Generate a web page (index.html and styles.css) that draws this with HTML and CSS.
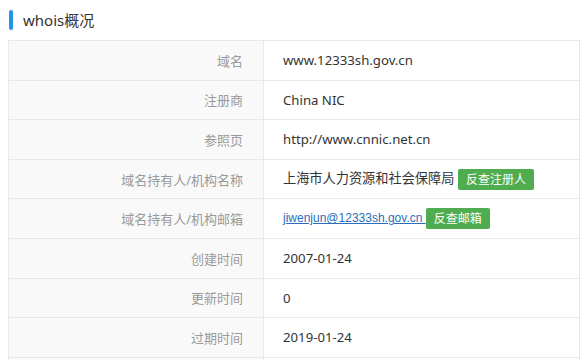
FILE: index.html
```html
<!DOCTYPE html>
<html lang="zh-CN">
<head>
<meta charset="utf-8">
<link rel="stylesheet" href="styles.css">
</head>
<body>
<div class="panel">
  <h2 class="title">whois概况</h2>
  <table class="whois">
    <tr><th>域名</th><td>www.12333sh.gov.cn</td></tr>
    <tr><th>注册商</th><td>China NIC</td></tr>
    <tr><th>参照页</th><td>http://www.cnnic.net.cn</td></tr>
    <tr><th>域名持有人/机构名称</th><td>上海市人力资源和社会保障局 <a class="btn" href="#">反查注册人</a></td></tr>
    <tr><th>域名持有人/机构邮箱</th><td><a class="mail" href="#">jiwenjun@12333sh.gov.cn </a> <a class="btn" href="#">反查邮箱</a></td></tr>
    <tr><th>创建时间</th><td>2007-01-24</td></tr>
    <tr><th>更新时间</th><td>0</td></tr>
    <tr><th>过期时间</th><td>2019-01-24</td></tr>
    <tr><th>&nbsp;</th><td>&nbsp;</td></tr>
  </table>
</div>
</body>
</html>
```
FILE: styles.css
```css
html, body {
  margin: 0;
  padding: 0;
  background: #fff;
  font-family: "Noto Sans", "Noto Sans CJK SC", sans-serif;
  overflow: hidden;
}
.panel {
  padding: 10px 0 0 8px;
}
.title {
  display: flex;
  align-items: center;
  gap: 10px;
  margin: 0 0 10px 1px;
  font-size: 15px;
  font-weight: normal;
  color: #333;
  line-height: 20px;
  height: 20px;
}
.title::before {
  content: "";
  width: 4px;
  height: 20px;
  border-radius: 2px;
  background: #2196e8;
}
.whois {
  border-collapse: collapse;
  width: 572px;
}
.whois th, .whois td {
  border: 1px solid #e8e8e8;
  height: 38.6px;
  padding: 0;
  vertical-align: middle;
}
.whois th {
  width: 234px;
  padding-right: 20px;
  text-align: right;
  background: #f9f9f9;
  color: #999;
  font-size: 13px;
  font-weight: normal;
}
.whois td {
  padding-left: 19px;
  color: #333;
  font-size: 13.2px;
}
.mail {
  color: #2a6ebb;
  font-family: "Liberation Sans", Arial, sans-serif;
  font-size: 12px;
  text-decoration: underline;
}
.btn {
  display: inline-block;
  margin-left: 0;
  padding: 0 8px;
  height: 21px;
  line-height: 21px;
  background: #4fad4f;
  color: #fff;
  font-size: 12px;
  border-radius: 2px;
  text-decoration: none;
  vertical-align: middle;
}
```
